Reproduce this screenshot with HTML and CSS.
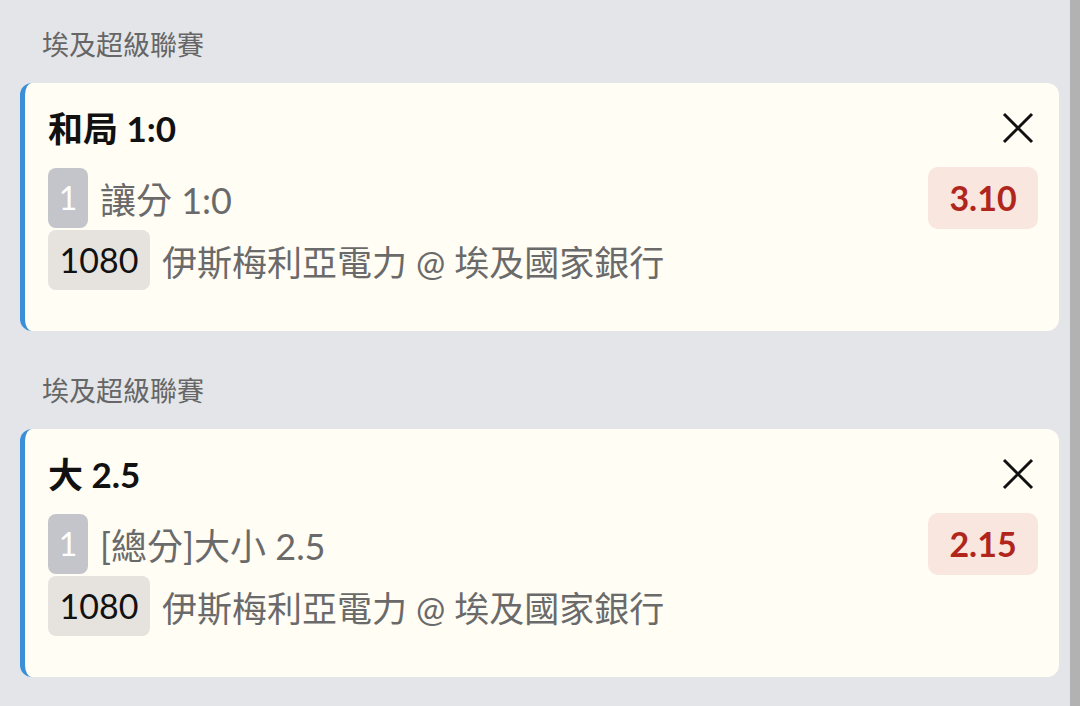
FILE: index.html
```html
<!DOCTYPE html>
<html lang="zh-Hant">
<head>
    <meta charset="UTF-8">
    <title>投注單</title>
    <link rel="stylesheet" href="styles.css">
</head>
<body>

<div class="page">
    <div class="list">
        <div class="section">
            <div class="league">埃及超級聯賽</div>
            <div class="card">
                <div class="card-head">
                    <div class="title">和局 1:0</div>
                    <svg class="close" viewBox="0 0 32 32" width="32" height="32">
                        <path d="M2 2 L30 30 M30 2 L2 30" stroke="#111" stroke-width="3" fill="none"/>
                    </svg>
                </div>
                <div class="row">
                    <span class="num">1</span>
                    <span class="market">讓分 1:0</span>
                    <span class="odds">3.10</span>
                </div>
                <div class="row">
                    <span class="code">1080</span>
                    <span class="match">伊斯梅利亞電力 @ 埃及國家銀行</span>
                </div>
            </div>
        </div>

        <div class="section">
            <div class="league">埃及超級聯賽</div>
            <div class="card">
                <div class="card-head">
                    <div class="title">大 2.5</div>
                    <svg class="close" viewBox="0 0 32 32" width="32" height="32">
                        <path d="M2 2 L30 30 M30 2 L2 30" stroke="#111" stroke-width="3" fill="none"/>
                    </svg>
                </div>
                <div class="row">
                    <span class="num">1</span>
                    <span class="market">[總分]大小 2.5</span>
                    <span class="odds">2.15</span>
                </div>
                <div class="row">
                    <span class="code">1080</span>
                    <span class="match">伊斯梅利亞電力 @ 埃及國家銀行</span>
                </div>
            </div>
        </div>
    </div>
    <div class="bar"></div>
</div>

</body>
</html>
```

FILE: styles.css
```css
*{
    margin: 0;
    padding: 0;
    box-sizing: border-box;
}
body{
    background: #e4e5e8;
    font-family: Lato, "Noto Sans CJK TC", sans-serif;
    height: 706px;
    overflow: hidden;
}
.page{
    display: flex;
    height: 706px;
}
.list{
    flex: 1;
    padding: 27px 11px 0 20px;
}
.bar{
    width: 10px;
    background: #b2b2b2;
}
.section + .section{
    margin-top: 42px;
}
.league{
    height: 36px;
    line-height: 36px;
    font-size: 27px;
    color: #666;
    padding-left: 22px;
    margin-bottom: 20px;
}
.card{
    background: #fffdf4;
    border-left: 5px solid #3b8fd8;
    border-radius: 12px;
    padding: 22px 21px 41px 23px;
    height: 248px;
}
.card-head{
    display: flex;
    align-items: center;
    justify-content: space-between;
    height: 46px;
    margin-bottom: 16px;
}
.title{
    font-size: 35px;
    font-weight: bold;
    color: #111;
    margin-top: -3px;
}
.close{
    margin-right: 4px;
}
.row{
    display: flex;
    align-items: center;
    font-size: 36px;
}
.row + .row{
    margin-top: 1px;
}
.num{
    width: 40px;
    height: 60px;
    line-height: 60px;
    text-align: center;
    background: #c4c4cb;
    color: #fff;
    border-radius: 8px;
    font-size: 32px;
}
.market{
    margin-left: 12px;
    color: #6a6a6a;
    flex: 1;
}
.odds{
    width: 110px;
    height: 62px;
    line-height: 62px;
    text-align: center;
    background: #f8e6df;
    color: #b0261d;
    font-weight: bold;
    font-size: 34px;
    border-radius: 10px;
}
.code{
    width: 102px;
    height: 60px;
    line-height: 60px;
    text-align: center;
    background: #e6e3de;
    color: #111;
    border-radius: 8px;
    font-size: 34px;
}
.match{
    margin-left: 12px;
    color: #6a6a6a;
    font-size: 35px;
}
```
